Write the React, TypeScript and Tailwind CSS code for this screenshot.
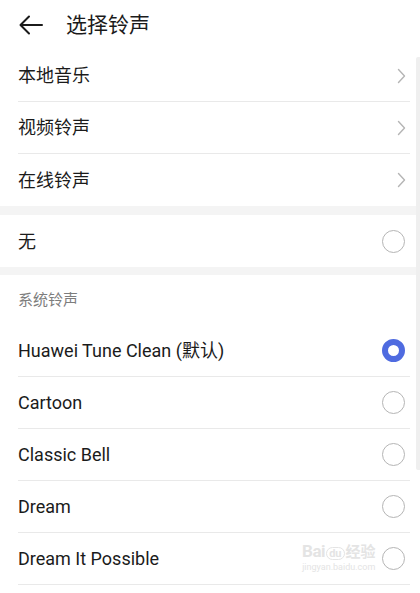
const topRows = ['本地音乐', '视频铃声', '在线铃声'];
const ringtones = ['Huawei Tune Clean (默认)', 'Cartoon', 'Classic Bell', 'Dream', 'Dream It Possible'];

function Radio({ checked }: { checked?: boolean }) {
  if (checked) {
    return <span className="block w-[23px] h-[23px] rounded-full border-[6px] border-[#4f6be0] bg-white" />;
  }
  return <span className="block w-[23px] h-[23px] rounded-full border border-[#b5b5b5] bg-white" />;
}

function Chevron() {
  return (
    <svg width="9" height="16" viewBox="0 0 9 16" fill="none" stroke="#b5b5b5" strokeWidth="1.4" strokeLinecap="round" strokeLinejoin="round">
      <path d="M1.5 1.5L7.5 8l-6 6.5" />
    </svg>
  );
}

export default function App() {
  return (
    <div
      className="relative w-[420px] h-[593px] overflow-hidden bg-white text-[#1b1b1b]"
      style={{ fontFamily: 'Roboto, "Noto Sans CJK SC", sans-serif' }}
    >
      {/* header */}
      <div className="flex items-center h-[50px] pl-[19px]">
        <svg width="24" height="20" viewBox="0 0 24 20" fill="none" stroke="#1b1b1b" strokeWidth="2" strokeLinecap="round" strokeLinejoin="round">
          <path d="M23 10H2" />
          <path d="M10 1.5L1.5 10l8.5 8.5" />
        </svg>
        <h1 className="ml-[23px] text-[21px] leading-none">选择铃声</h1>
      </div>

      {/* links */}
      <div className="pl-[18px]">
        {topRows.map((label, i) => (
          <div
            key={label}
            className={`flex items-center justify-between h-[52px] mr-[10px] pr-[4px] ${i < topRows.length - 1 ? 'border-b border-[#e9e9e9]' : ''}`}
          >
            <span className="text-[18px]">{label}</span>
            <Chevron />
          </div>
        ))}
      </div>

      <div className="h-[9px] bg-[#f4f4f4]" />

      <div className="flex items-center justify-between h-[52px] pl-[18px] pr-[15px]">
        <span className="text-[18px]">无</span>
        <Radio />
      </div>

      <div className="h-[8px] bg-[#f4f4f4]" />

      <div className="flex items-center h-[50px] pl-[18px] text-[15px] text-[#7d7d7d]">系统铃声</div>

      <div className="pl-[18px]">
        {ringtones.map((name, i) => (
          <div key={name} className="flex items-center justify-between h-[52px] mr-[10px] pr-[5px] border-b border-[#e9e9e9]">
            <span className="text-[18px]">{name}</span>
            <Radio checked={i === 0} />
          </div>
        ))}
      </div>

      {/* scroll indicator */}
      <div className="absolute right-0 top-[57px] w-[4px] h-[413px] rounded-l-[2px] bg-[#efefef]" />

      {/* watermark */}
      <div className="absolute left-[302px] top-[543px] flex flex-col items-center text-[#e4e4e4] pointer-events-none">
        <div className="flex items-end leading-none">
          <span className="text-[17px] font-bold tracking-tight">Bai</span>
          <span className="mx-[1px] text-[11px] font-bold border border-[#e4e4e4] rounded-full px-[2px]">du</span>
          <span className="text-[15px] font-bold">经验</span>
        </div>
        <span className="text-[9px] leading-none mt-[3px]">jingyan.baidu.com</span>
      </div>
    </div>
  );
}
